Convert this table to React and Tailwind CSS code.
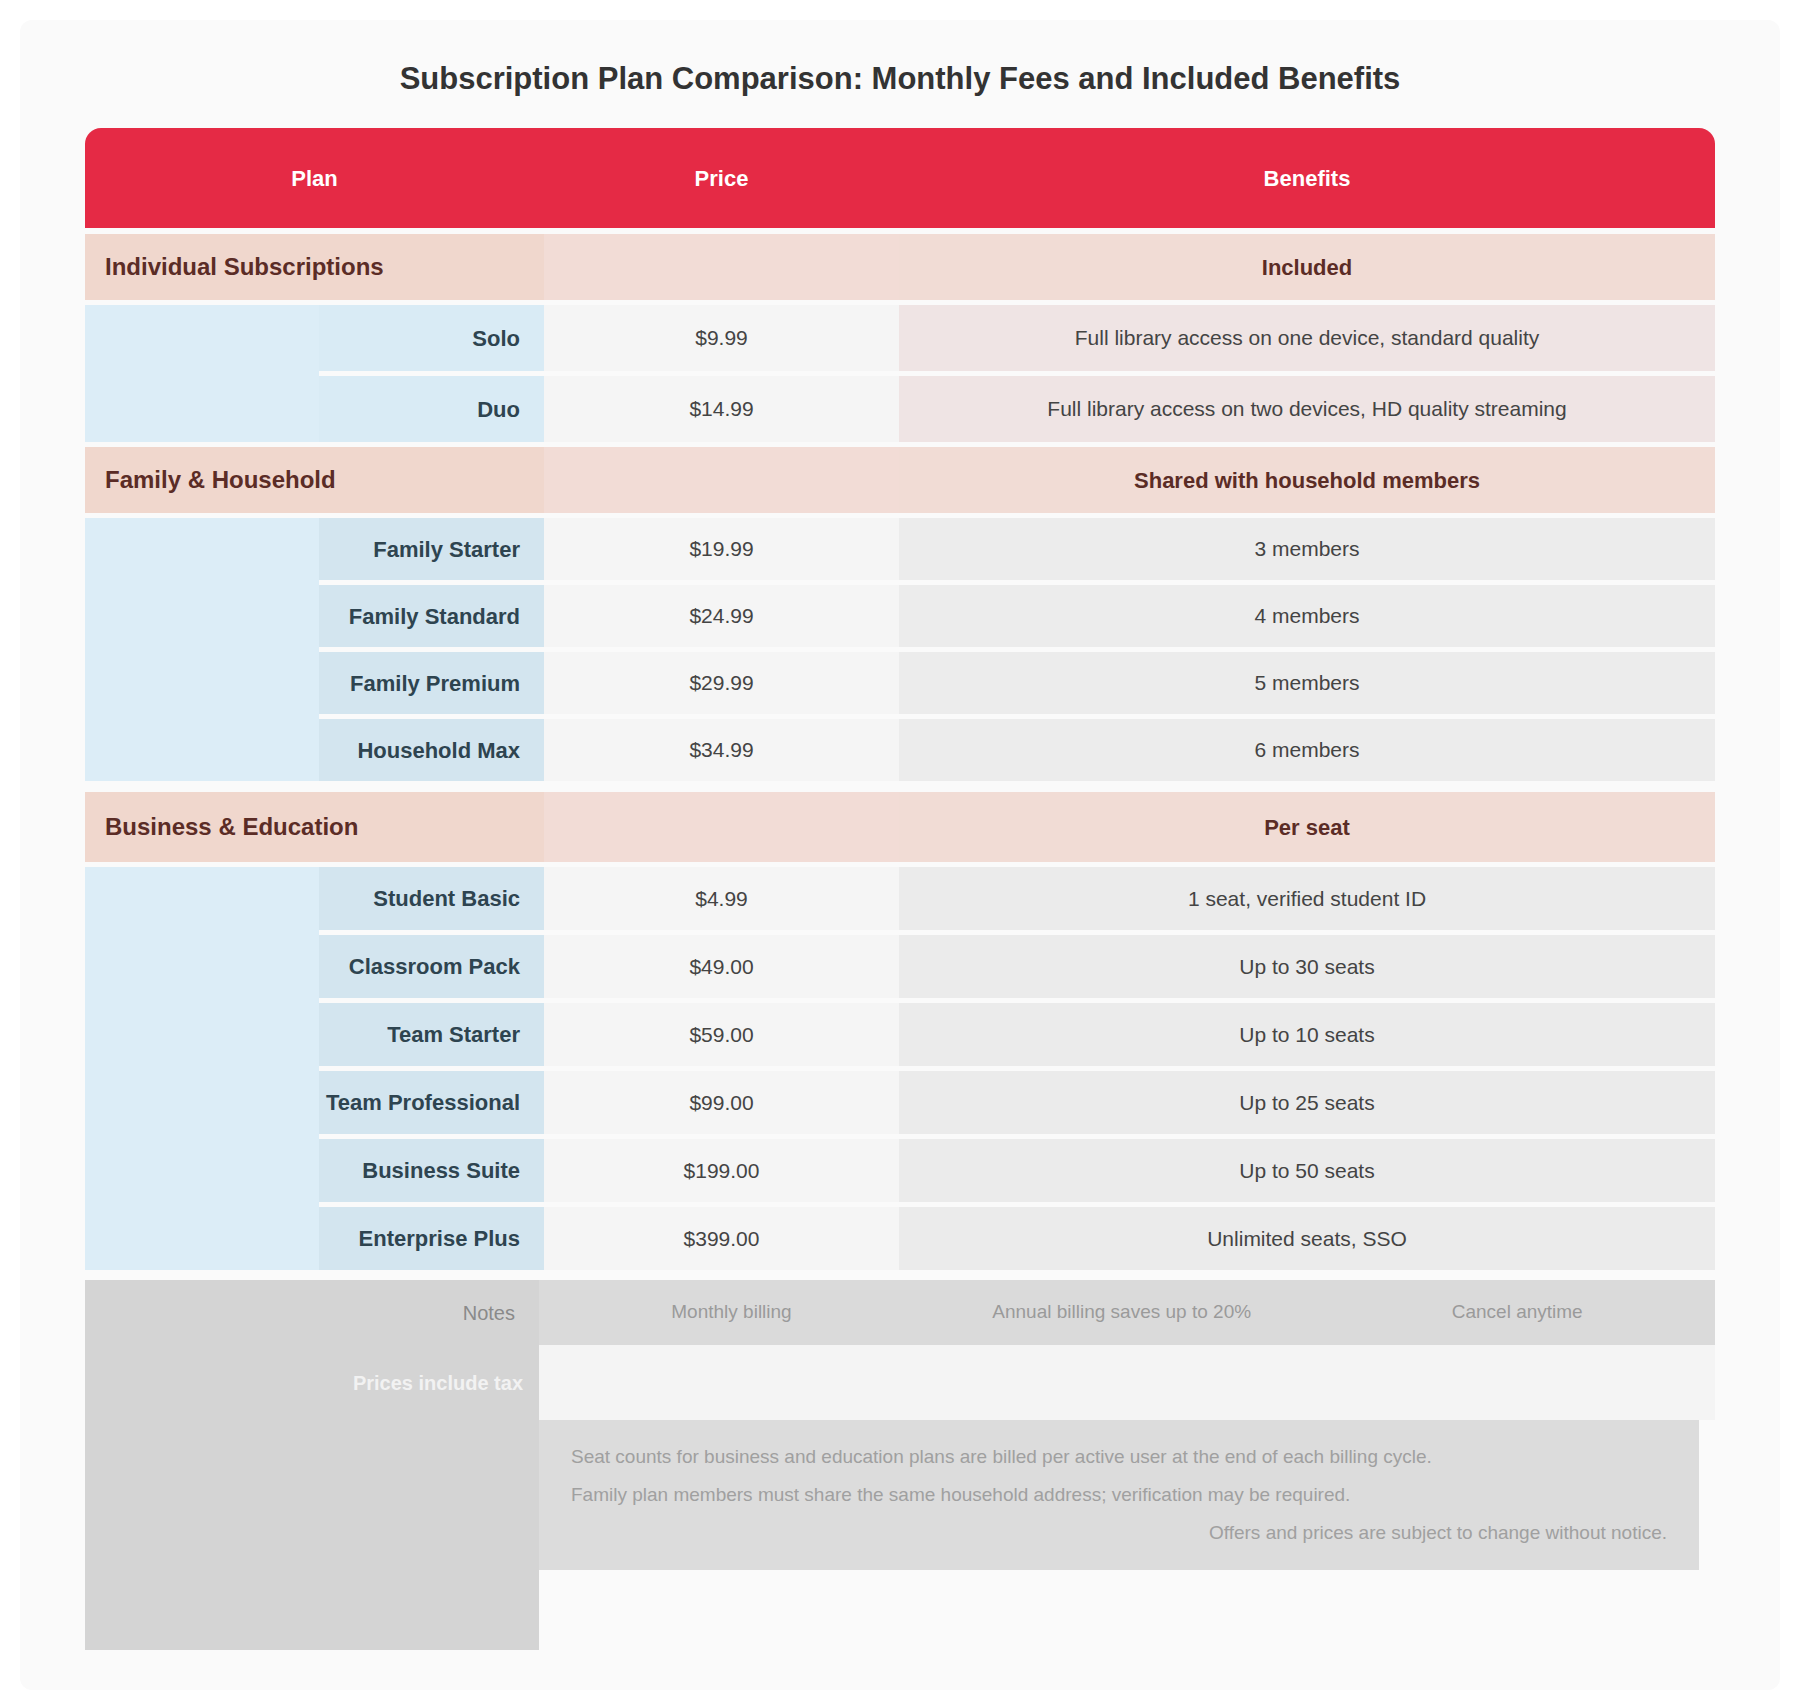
import React from "react";

const groups = [
  {
    title: "Individual Subscriptions",
    note: "Included",
    secClass: "h-[66px]",
    rowH: "h-[66px]",
    tint: "bg-[#efe4e4]",
    span: "row-span-2",
    labelBg: "bg-[#d9ebf5]",
    rows: [
      { label: "Solo", price: "$9.99", perks: "Full library access on one device, standard quality" },
      { label: "Duo", price: "$14.99", perks: "Full library access on two devices, HD quality streaming" },
    ],
  },
  {
    title: "Family & Household",
    note: "Shared with household members",
    secClass: "h-[66px]",
    rowH: "h-[62px]",
    tint: "bg-[#ececec]",
    span: "row-span-4",
    labelBg: "bg-[#d3e5ef]",
    rows: [
      { label: "Family Starter", price: "$19.99", perks: "3 members" },
      { label: "Family Standard", price: "$24.99", perks: "4 members" },
      { label: "Family Premium", price: "$29.99", perks: "5 members" },
      { label: "Household Max", price: "$34.99", perks: "6 members" },
    ],
  },
  {
    title: "Business & Education",
    note: "Per seat",
    secClass: "mt-[6px] h-[70px]",
    rowH: "h-[63px]",
    tint: "bg-[#ebebeb]",
    span: "row-span-6",
    labelBg: "bg-[#d3e5ef]",
    rows: [
      { label: "Student Basic", price: "$4.99", perks: "1 seat, verified student ID" },
      { label: "Classroom Pack", price: "$49.00", perks: "Up to 30 seats" },
      { label: "Team Starter", price: "$59.00", perks: "Up to 10 seats" },
      { label: "Team Professional", price: "$99.00", perks: "Up to 25 seats" },
      { label: "Business Suite", price: "$199.00", perks: "Up to 50 seats" },
      { label: "Enterprise Plus", price: "$399.00", perks: "Unlimited seats, SSO" },
    ],
  },
];

const Section = ({ group }) => (
  <div className={`col-span-4 grid grid-cols-subgrid ${group.secClass}`}>
    <div className="col-span-2 flex items-center bg-[#f0d7cd] pl-5">
      <span className="text-[24px] font-bold text-[#5b2c26]">{group.title}</span>
    </div>
    <div className="bg-[#f2dcd6]" />
    <div className="flex items-center justify-center bg-[#f1dcd5]">
      <span className="text-[22px] font-bold text-[#5b2c26]">{group.note}</span>
    </div>
  </div>
);

const Rows = ({ group }) => (
  <>
    <div className={`${group.span} bg-[#dcedf7]`} />
    {group.rows.map((row) => (
      <React.Fragment key={row.label}>
        <div
          className={`${group.rowH} flex items-center justify-end ${group.labelBg} pr-6 text-[22px] font-semibold text-[#2e4450]`}
          style={{ gridColumnStart: 2 }}
        >
          {row.label}
        </div>
        <div className="flex items-center justify-center bg-[#f5f5f5] text-[21px] text-[#444]">
          {row.price}
        </div>
        <div className={`flex items-center justify-center ${group.tint} text-[21px] text-[#444]`}>
          {row.perks}
        </div>
      </React.Fragment>
    ))}
  </>
);

export default function App() {
  return (
    <div className="min-h-[1706px] bg-white p-5 font-['Liberation_Sans',Arial,sans-serif]">
      <div className="min-h-[1666px] rounded-xl bg-[#fafafa] pt-[40px] pb-10">
        <h1 className="text-center text-[31px] leading-[38px] font-bold text-[#333]">
          Subscription Plan Comparison: Monthly Fees and Included Benefits
        </h1>

        <div className="mx-auto mt-[30px] w-[1630px]">
          <div className="grid h-[100px] grid-cols-[459px_355px_816px] rounded-t-2xl bg-[#e52a45] text-[22px] font-bold text-white">
            <div className="flex items-center justify-center">Plan</div>
            <div className="flex items-center justify-center">Price</div>
            <div className="flex items-center justify-center">Benefits</div>
          </div>

          <div className="mt-[6px] grid grid-cols-[234px_225px_355px_816px] gap-y-[5px]">
            {groups.map((g) => (
              <React.Fragment key={g.title}>
                <Section group={g} />
                <Rows group={g} />
              </React.Fragment>
            ))}
          </div>

          <div className="mt-[10px] flex">
            <div className="flex h-[370px] w-[454px] flex-col bg-[#d4d4d4]">
              <div className="flex h-[65px] items-center justify-end pr-6 text-[20px] text-[#8a8a8a]">Notes</div>
              <div className="flex h-[75px] items-center justify-end pr-4 text-[20px] font-semibold text-[#f2f2f2]">
                Prices include tax
              </div>
            </div>
            <div className="flex flex-1 flex-col">
              <div className="flex h-[65px] items-center justify-around bg-[#dadada] px-8 text-[19px] text-[#9a9a9a]">
                <span>Monthly billing</span>
                <span>Annual billing saves up to 20%</span>
                <span>Cancel anytime</span>
              </div>
              <div className="h-[75px] bg-[#f4f4f4]" />
              <div className="mr-4 flex flex-col gap-3 bg-[#dcdcdc] px-8 py-6 text-[19px] leading-[26px] text-[#a0a0a0]">
                <p>Seat counts for business and education plans are billed per active user at the end of each billing cycle.</p>
                <p>Family plan members must share the same household address; verification may be required.</p>
                <p className="text-right">Offers and prices are subject to change without notice.</p>
              </div>
            </div>
          </div>
        </div>
      </div>
    </div>
  );
}
